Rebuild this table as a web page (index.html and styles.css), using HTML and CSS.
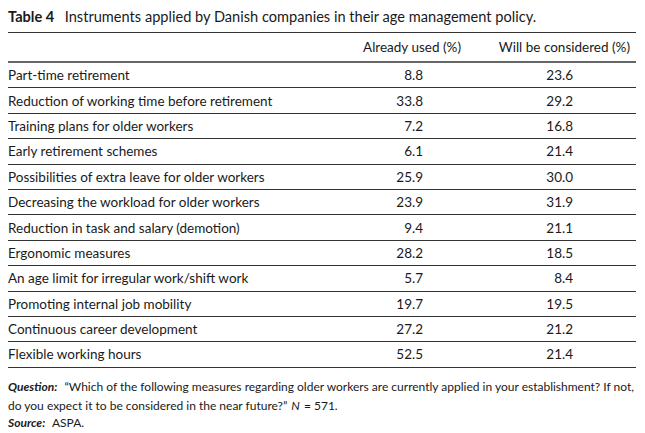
FILE: index.html
```html
<!DOCTYPE html>
<html>
<head>
<meta charset="utf-8">
<link rel="stylesheet" href="styles.css">
</head>
<body>
<div class="page">
  <div class="caption"><span class="tno">Table 4</span>&nbsp; Instruments applied by Danish companies in their age management policy.</div>
  <div class="table">
    <div class="row head">
      <div class="label"></div>
      <div class="c1">Already used (%)</div>
      <div class="c2">Will be considered (%)</div>
    </div>
    <div class="row"><div class="label">Part-time retirement</div><div class="n1">8.8</div><div class="n2">23.6</div></div>
    <div class="row"><div class="label">Reduction of working time before retirement</div><div class="n1">33.8</div><div class="n2">29.2</div></div>
    <div class="row"><div class="label">Training plans for older workers</div><div class="n1">7.2</div><div class="n2">16.8</div></div>
    <div class="row"><div class="label">Early retirement schemes</div><div class="n1">6.1</div><div class="n2">21.4</div></div>
    <div class="row"><div class="label">Possibilities of extra leave for older workers</div><div class="n1">25.9</div><div class="n2">30.0</div></div>
    <div class="row"><div class="label">Decreasing the workload for older workers</div><div class="n1">23.9</div><div class="n2">31.9</div></div>
    <div class="row"><div class="label">Reduction in task and salary (demotion)</div><div class="n1">9.4</div><div class="n2">21.1</div></div>
    <div class="row"><div class="label">Ergonomic measures</div><div class="n1">28.2</div><div class="n2">18.5</div></div>
    <div class="row"><div class="label">An age limit for irregular work/shift work</div><div class="n1">5.7</div><div class="n2">8.4</div></div>
    <div class="row"><div class="label">Promoting internal job mobility</div><div class="n1">19.7</div><div class="n2">19.5</div></div>
    <div class="row"><div class="label">Continuous career development</div><div class="n1">27.2</div><div class="n2">21.2</div></div>
    <div class="row"><div class="label">Flexible working hours</div><div class="n1">52.5</div><div class="n2">21.4</div></div>
  </div>
  <div class="notes">
    <p class="q"><span class="lbl">Question:</span> “Which of the following measures regarding older workers are currently applied in your establishment? If not, do you expect it to be considered in the near future?” <span class="var">N</span> = 571.</p>
    <p class="src"><span class="lbl">Source:</span> ASPA.</p>
  </div>
</div>
</body>
</html>
```

FILE: styles.css
```css
html, body {
  margin: 0;
  padding: 0;
  background: #fff;
}
body {
  font-family: Lato, "Open Sans", sans-serif;
  color: #1a1a1a;
}
.page {
  width: 628px;
  padding: 7px 9px 0 8px;
}
.caption {
  font-size: 14.6px;
  line-height: 19px;
  height: 25px;
}
.tno {
  font-weight: 700;
  margin-right: 3px;
}
.table {
  border-top: 1px solid #333;
}
.row {
  display: grid;
  grid-template-columns: 334px 140px 154px;
  height: 25px;
  align-items: center;
  border-bottom: 1px solid #333;
  font-size: 13.5px;
  line-height: 16px;
  box-sizing: border-box;
}
.row + .row {
  height: 25.4px;
}
.row.head {
  height: 30px;
  border-bottom: 2px solid #666;
}
.c1 {
  text-align: center;
}
.c2 {
  text-align: right;
  padding-right: 6px;
}
.n1 {
  text-align: right;
  padding-right: 59px;
}
.n2 {
  text-align: right;
  padding-right: 63px;
}
.notes {
  font-size: 12px;
  line-height: 19px;
  padding-top: 9px;
}
.notes p {
  margin: 0;
}
.lbl {
  font-weight: 700;
  font-style: italic;
  margin-right: 4px;
}
.var {
  font-style: italic;
  margin: 0 1px;
}
.src {
  line-height: 16px;
}
```
